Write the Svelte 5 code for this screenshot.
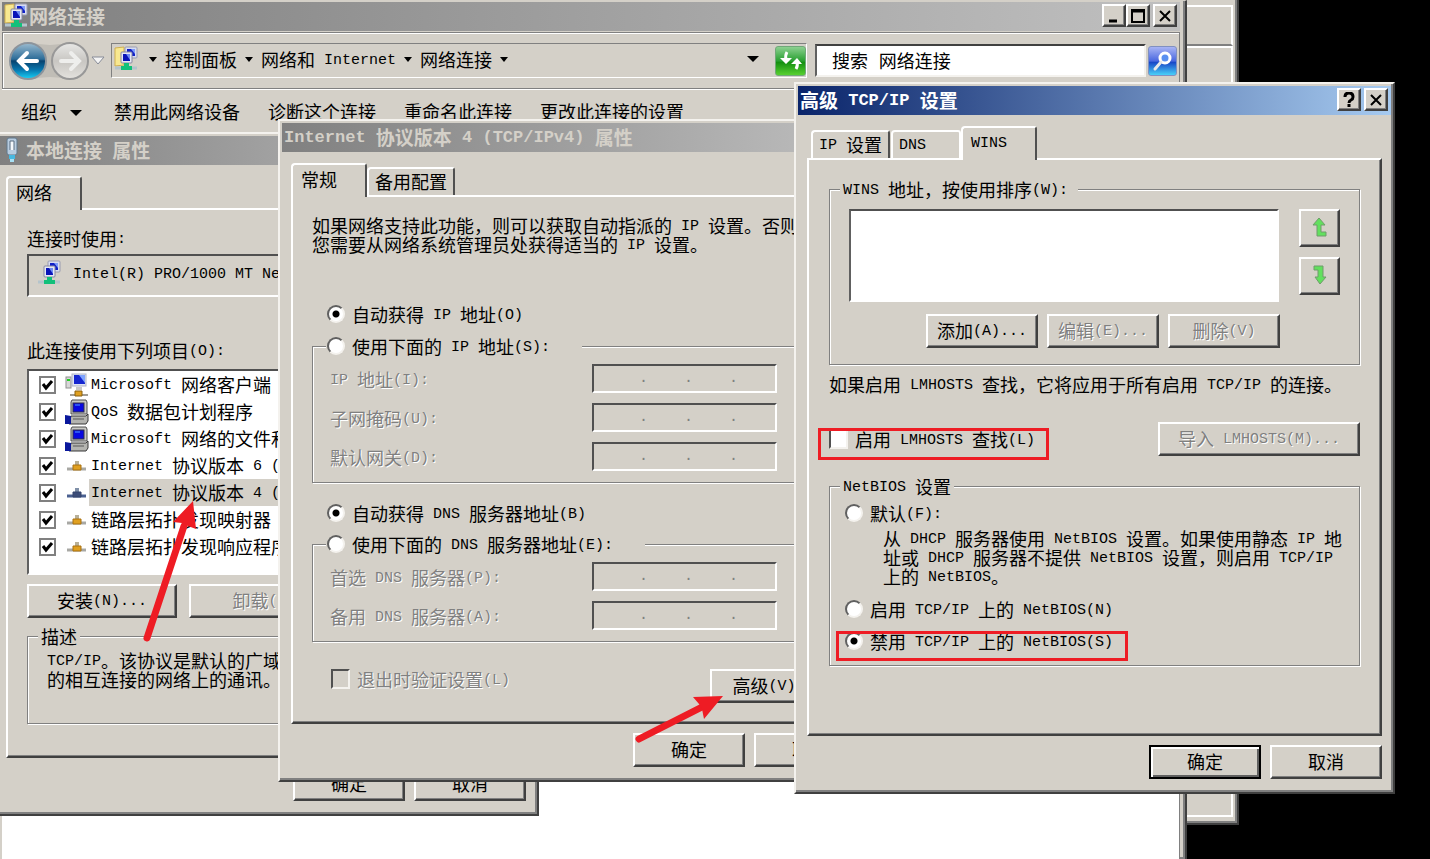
<script>
    let netbios = $state("disable")
    let ipMode = $state("auto")
    let dnsMode = $state("auto")
    let lmhosts = $state(false)
    let search = $state("搜索 网络连接")
    let items = $state([
        {name: "Microsoft 网络客户端", icon: "client", checked: true},
        {name: "QoS 数据包计划程序", icon: "pc", checked: true},
        {name: "Microsoft 网络的文件和", icon: "pc", checked: true},
        {name: "Internet 协议版本 6 (", icon: "proto", checked: true},
        {name: "Internet 协议版本 4 (", icon: "proto", checked: true, selected: true},
        {name: "链路层拓扑发现映射器", icon: "proto", checked: true},
        {name: "链路层拓扑发现响应程序", icon: "proto", checked: true}
    ])
    const emptyIp = "     .    .    ."
    const ipFields = ["IP 地址(I):", "子网掩码(U):", "默认网关(D):"]
    const dnsFields = ["首选 DNS 服务器(P):", "备用 DNS 服务器(A):"]
    const crumbs = ["控制面板", "网络和 Internet", "网络连接"]
    const commands = ["禁用此网络设备", "诊断这个连接", "重命名此连接", "更改此连接的设置"]

    // latin runs are set half as wide as a chinese character
    function parts(text) {
        return text.split(/([\x20-\x7e]+)/).filter(p => p != "")
    }
</script>

{#snippet mix(text)}{#each parts(text) as p}{#if p.charCodeAt(0) < 127}<span class="latin">{p}</span>{:else}{p}{/if}{/each}{/snippet}

{#snippet monitors()}
    <rect x="11" y="1" width="12" height="11" rx="1" fill="#d8dcf0" stroke="#9a9cb0"/>
    <rect x="13" y="3" width="8" height="7" fill="#1020c8"/>
    <path d="M17 3h4v5z" fill="#7f9cf8"/>
    <rect x="7" y="6" width="11" height="11" rx="1" fill="#e6e8f4" stroke="#8688a0"/>
    <rect x="9" y="8" width="7" height="7" fill="#0a14b8"/>
    <path d="M12 8h4v6z" fill="#6f8cf4"/>
    <path d="M1 22h22" stroke="#b4c4cc" stroke-width="3"/>
    <path d="M10 17h5v3h3v4H7v-4h3z" fill="#12c07a"/>
{/snippet}

{#snippet folderIcon()}
    <svg width="24" height="26" viewBox="0 0 24 26" aria-hidden="true">
        <path d="M1 2l9-1v18l-9 1z" fill="#f8e890" stroke="#d0b050"/>
        {@render monitors()}
    </svg>
{/snippet}

{#snippet itemIcon(kind, selected)}
    <svg width="24" height="26" viewBox="0 0 24 26" aria-hidden="true">
        {#if kind == "client"}
            <rect x="1" y="5" width="5" height="11" fill="#d8d8d8" stroke="#909090"/>
            <path d="M2 8h3" stroke="#20d020" stroke-width="2"/>
            <rect x="7" y="2" width="14" height="12" fill="#dfe4f4" stroke="#b0b4c4"/>
            <rect x="9" y="3" width="11" height="9" fill="#1626d0"/>
            <path d="M14 3h6v8z" fill="#7fa4ff"/>
            <path d="M11 15h6v3h-6z" fill="#c8c8c8"/>
            <path d="M5 23h18" stroke="#a09c94" stroke-width="2"/>
            <path d="M10 19h7v5h-7z" fill="#e0a020" stroke="#8a6010"/>
        {:else if kind == "pc"}
            <path d="M7 1h14l1 2v12H6V3z" fill="#c8c8c4" stroke="#505050"/>
            <rect x="8" y="4" width="11" height="9" fill="#0808e0" stroke="#303048"/>
            <path d="M10 6h5" stroke="#50a0ff"/>
            <path d="M6 17h15l2-2v7l-2 3H4z" fill="#b4b4b0" stroke="#383838"/>
            <path d="M8 20h11" stroke="#585858"/>
            <path d="M0 16l6 1v8H0z" fill="#0a189c"/>
        {:else}
            <path d="M2 16h19" stroke={selected ? "#4a6090" : "#a8a8a4"} stroke-width="3"/>
            <path d="M10 8h4v4h-4z" fill={selected ? "#8090a8" : "#b8b098"}/>
            <path d="M8 12h8v5H8z" fill={selected ? "#3c4c78" : "#e0a020"} stroke={selected ? "#34446c" : "#a87010"}/>
        {/if}
    </svg>
{/snippet}

{#snippet ipRow(id, text)}
    <div class="ip_row">
        <label for={id} class="disabled">{@render mix(text)}</label>
        <input type="text" {id} class="ip" value={emptyIp} disabled>
    </div>
{/snippet}

<main class="desktop">
    <div class="window back">
        <div class="back_top"></div>
        <div class="back_body"></div>
    </div>

    <section class="window explorer">
        <header class="title inactive">
            {@render folderIcon()}
            <h1>网络连接</h1>
            <div class="title_buttons">
                <button aria-label="最小化"><svg width="14" height="14"><path d="M2 12h8" stroke="#000" stroke-width="3"/></svg></button>
                <button aria-label="最大化"><svg width="14" height="14"><path d="M1 1h12v12H1z" fill="none" stroke="#000" stroke-width="2"/><path d="M0 2h14" stroke="#000" stroke-width="3"/></svg></button>
                <button class="close" aria-label="关闭"><svg width="14" height="14"><path d="M2 2l10 10M12 2L2 12" stroke="#000" stroke-width="2"/></svg></button>
            </div>
        </header>
        <nav class="toolbar">
            <svg class="travel" width="102" height="44" viewBox="0 0 102 44">
                <defs>
                    <linearGradient id="blue" x1="0" y1="0" x2="0" y2="1">
                        <stop offset="0" stop-color="#9cbcd0"/>
                        <stop offset="0.45" stop-color="#2c6c98"/>
                        <stop offset="0.5" stop-color="#08436f"/>
                        <stop offset="0.75" stop-color="#0878b0"/>
                        <stop offset="1" stop-color="#18d4f8"/>
                    </linearGradient>
                    <linearGradient id="grey" x1="0" y1="0" x2="0" y2="1">
                        <stop offset="0" stop-color="#e8e8e6"/>
                        <stop offset="0.5" stop-color="#c8c6c2"/>
                        <stop offset="1" stop-color="#e4e2de"/>
                    </linearGradient>
                </defs>
                <path d="M24 3q21 6 42 0v38q-21-6-42 0z" fill="#c0bdb6"/>
                <circle cx="23" cy="22" r="18" fill="url(#blue)" stroke="#8c949c" stroke-width="2"/>
                <path d="M32 22H15M22 14l-8 8 8 8" fill="none" stroke="#fff" stroke-width="4" stroke-linecap="round"/>
                <circle cx="65" cy="22" r="18" fill="url(#grey)" stroke="#989898" stroke-width="2"/>
                <path d="M56 22h17M66 14l8 8-8 8" fill="none" stroke="#eeeeec" stroke-width="4" stroke-linecap="round"/>
                <path d="M87 18h12l-6 7z" fill="#f4f4f4" stroke="#888c98"/>
            </svg>
            <div class="address">
                {@render folderIcon()}
                <span class="arrow small"></span>
                {#each crumbs as crumb}
                    <a href="#crumb">{@render mix(crumb)}</a>
                    <span class="arrow small"></span>
                {/each}
                <span class="arrow last"></span>
                <button class="refresh" aria-label="刷新">
                    <svg width="26" height="26" viewBox="0 0 26 26">
                        <path d="M9 4q-2 3-1 8M18 21q2-3 1-7" fill="none" stroke="#fff" stroke-width="3"/>
                        <path d="M2 10h12l-6 6zM13 16h11l-5-6z" fill="#fff"/>
                    </svg>
                </button>
            </div>
            <input type="text" class="search" aria-label="搜索" bind:value={search}>
            <button class="find" aria-label="查找">
                <svg width="26" height="26" viewBox="0 0 26 26">
                    <circle cx="15" cy="10" r="5" fill="#5a90f0" stroke="#fff" stroke-width="3"/>
                    <path d="M11 14l-6 7" stroke="#e8e8e8" stroke-width="3" stroke-linecap="round"/>
                </svg>
            </button>
        </nav>
        <div class="commands">
            <button>组织 <span class="arrow"></span></button>
            {#each commands as command}
                <button>{command}</button>
            {/each}
        </div>
        <div class="files"></div>
    </section>

    <section class="window local">
        <header class="title inactive">
            <svg class="plug" width="12" height="26" viewBox="0 0 12 26" aria-hidden="true">
                <rect x="1" y="1" width="10" height="17" rx="2" fill="#b8cce0" stroke="#60788c"/>
                <path d="M4 13V4h4v9" fill="#f4f8fc" stroke="#586c80"/>
                <path d="M3 18h6v4H3z" fill="#48b8e0"/>
                <path d="M4 22h4v3H4z" fill="#a8e0f4"/>
            </svg>
            <h1>{@render mix("本地连接 属性")}</h1>
        </header>
        <div class="body">
            <div class="tabs" role="tablist">
                <button role="tab" aria-selected="true" class="tab selected">网络</button>
            </div>
            <div class="panel">
                <p class="line">{@render mix("连接时使用:")}</p>
                <div class="adapter">
                    <svg width="24" height="26" viewBox="0 0 24 26" aria-hidden="true">{@render monitors()}</svg>
                    <span>{@render mix("Intel(R) PRO/1000 MT Ne")}</span>
                </div>
                <p class="line items_label">{@render mix("此连接使用下列项目(O):")}</p>
                <ul class="items">
                    {#each items as item}
                        <li>
                            <label>
                                <input type="checkbox" class="tick" bind:checked={item.checked}>
                                {@render itemIcon(item.icon, item.selected)}
                                <span class="item_name" class:selected={item.selected}>{@render mix(item.name)}</span>
                            </label>
                        </li>
                    {/each}
                </ul>
                <div class="item_buttons">
                    <button class="btn">{@render mix("安装(N)...")}</button>
                    <button class="btn" disabled>{@render mix("卸载(U)")}</button>
                </div>
                <fieldset class="describe">
                    <legend>描述</legend>
                    <p class="text">{@render mix("TCP/IP。该协议是默认的广域")}<br>的相互连接的网络上的通讯。</p>
                </fieldset>
            </div>
            <footer>
                <button class="btn">确定</button>
                <button class="btn">取消</button>
            </footer>
        </div>
    </section>

    <section class="window ipv4">
        <header class="title inactive">
            <h1>{@render mix("Internet 协议版本 4 (TCP/IPv4) 属性")}</h1>
        </header>
        <div class="body">
            <div class="tabs" role="tablist">
                <button role="tab" aria-selected="true" class="tab selected">常规</button>
                <button role="tab" aria-selected="false" class="tab">备用配置</button>
            </div>
            <div class="panel">
                <p class="text">{@render mix("如果网络支持此功能，则可以获取自动指派的 IP 设置。否则")}<br>{@render mix("您需要从网络系统管理员处获得适当的 IP 设置。")}</p>
                <label class="choice auto_ip">
                    <input type="radio" name="ip" value="auto" bind:group={ipMode}>
                    <span>{@render mix("自动获得 IP 地址(O)")}</span>
                </label>
                <fieldset class="manual">
                    <legend>
                        <label class="choice">
                            <input type="radio" name="ip" value="manual" bind:group={ipMode}>
                            <span>{@render mix("使用下面的 IP 地址(S):")}</span>
                        </label>
                    </legend>
                    {#each ipFields as field, i}
                        {@render ipRow("ip" + i, field)}
                    {/each}
                </fieldset>
                <label class="choice auto_dns">
                    <input type="radio" name="dns" value="auto" bind:group={dnsMode}>
                    <span>{@render mix("自动获得 DNS 服务器地址(B)")}</span>
                </label>
                <fieldset class="manual">
                    <legend>
                        <label class="choice">
                            <input type="radio" name="dns" value="manual" bind:group={dnsMode}>
                            <span>{@render mix("使用下面的 DNS 服务器地址(E):")}</span>
                        </label>
                    </legend>
                    {#each dnsFields as field, i}
                        {@render ipRow("dns" + i, field)}
                    {/each}
                </fieldset>
                <div class="advanced_row">
                    <label class="choice disabled">
                        <input type="checkbox" class="box" disabled>
                        <span>{@render mix("退出时验证设置(L)")}</span>
                    </label>
                    <button class="btn">{@render mix("高级(V)...")}</button>
                </div>
            </div>
            <footer>
                <button class="btn">确定</button>
                <button class="btn">取消</button>
            </footer>
        </div>
    </section>

    <section class="window tcpip">
        <header class="title">
            <h1>{@render mix("高级 TCP/IP 设置")}</h1>
            <div class="title_buttons">
                <button aria-label="帮助"><svg width="14" height="16"><path d="M3 5q0-4 4-4t4 4q0 2-2 3-2 1-2 3M7 12v3" fill="none" stroke="#000" stroke-width="3"/></svg></button>
                <button class="close" aria-label="关闭"><svg width="14" height="14"><path d="M2 2l10 10M12 2L2 12" stroke="#000" stroke-width="2"/></svg></button>
            </div>
        </header>
        <div class="body">
            <div class="tabs inset" role="tablist">
                <button role="tab" aria-selected="false" class="tab">{@render mix("IP 设置")}</button>
                <button role="tab" aria-selected="false" class="tab dns">{@render mix("DNS")}</button>
                <button role="tab" aria-selected="true" class="tab selected">{@render mix("WINS")}</button>
            </div>
            <div class="panel">
                <fieldset class="wins">
                    <legend class="wide">{@render mix("WINS 地址，按使用排序(W):")}</legend>
                    <div class="wins_list">
                        <select size="4" aria-label="WINS 地址"></select>
                        <div class="order">
                            <button class="btn" aria-label="上移"><svg width="16" height="20" viewBox="0 0 16 20"><path d="M7 1l6 7H9v7h5v4H5V8H1z" fill="#62e05e" stroke="#6f9c6a"/></svg></button>
                            <button class="btn" aria-label="下移"><svg width="16" height="20" viewBox="0 0 16 20"><path d="M8 19l6-7h-3V1H2v4h4v7H3z" fill="#62e05e" stroke="#6f9c6a"/></svg></button>
                        </div>
                    </div>
                    <div class="wins_buttons">
                        <button class="btn">{@render mix("添加(A)...")}</button>
                        <button class="btn" disabled>{@render mix("编辑(E)...")}</button>
                        <button class="btn" disabled>{@render mix("删除(V)")}</button>
                    </div>
                </fieldset>
                <p class="line note">{@render mix("如果启用 LMHOSTS 查找，它将应用于所有启用 TCP/IP 的连接。")}</p>
                <div class="lmhosts">
                    <label class="choice">
                        <input type="checkbox" class="box" bind:checked={lmhosts}>
                        <span>{@render mix("启用 LMHOSTS 查找(L)")}</span>
                    </label>
                    <button class="btn" disabled>{@render mix("导入 LMHOSTS(M)...")}</button>
                </div>
                <fieldset class="netbios">
                    <legend>{@render mix("NetBIOS 设置")}</legend>
                    <label class="choice">
                        <input type="radio" name="netbios" value="default" bind:group={netbios}>
                        <span>{@render mix("默认(F):")}</span>
                    </label>
                    <p class="text">{@render mix("从 DHCP 服务器使用 NetBIOS 设置。如果使用静态 IP 地")}<br>{@render mix("址或 DHCP 服务器不提供 NetBIOS 设置，则启用 TCP/IP")}<br>{@render mix("上的 NetBIOS。")}</p>
                    <label class="choice">
                        <input type="radio" name="netbios" value="enable" bind:group={netbios}>
                        <span>{@render mix("启用 TCP/IP 上的 NetBIOS(N)")}</span>
                    </label>
                    <label class="choice">
                        <input type="radio" name="netbios" value="disable" bind:group={netbios}>
                        <span>{@render mix("禁用 TCP/IP 上的 NetBIOS(S)")}</span>
                    </label>
                </fieldset>
            </div>
            <footer>
                <button class="btn default">确定</button>
                <button class="btn">取消</button>
            </footer>
        </div>
    </section>

    <!-- red marks for the steps -->
    <svg class="marks" aria-hidden="true">
        <g fill="none" stroke="#ee1c24">
            <rect x="819" y="429" width="228" height="29" stroke-width="3" shape-rendering="crispEdges"/>
            <rect x="837" y="632" width="289" height="27" stroke-width="3" shape-rendering="crispEdges"/>
            <path d="M147 638L184 526M639 739L704 706" stroke-width="7" stroke-linecap="round"/>
        </g>
        <path d="M193 501L173 522L182 523L188 526L196 529zM723 696L693 697L699 704L702 709L704 719z" fill="#ee1c24"/>
    </svg>
</main>

<style>
    :global(body){
        background-color: black;
    }

    .desktop{
        position: relative;
        min-height: 100vh;
        overflow: hidden;
        background-color: black;
        color: black;
        font-family: "Noto Sans CJK SC", sans-serif;
        font-size: 18px;
        line-height: 20px;
        white-space: nowrap;
    }

    .desktop *{
        box-sizing: border-box;
    }

    .latin{
        font-family: "Liberation Mono", monospace;
        font-size: 15px;
        line-height: 0;
        vertical-align: 3px;
        white-space: pre;
    }

    p, ul{
        margin: 0;
        padding: 0;
        list-style: none;
    }

    svg{
        display: block;
        flex: none;
    }

    button, input, select{
        font: inherit;
        color: inherit;
        margin: 0;
        border-radius: 0;
    }

    .window{
        position: absolute;
        padding: 2px;
        background-color: #d4d0c8;
        border: 2px solid;
        border-color: #f4f2ee #404040 #404040 #f4f2ee;
        box-shadow: inset -2px -2px #808080;
    }

    .back{
        left: 700px;
        top: -10px;
        width: 539px;
        height: 835px;
        padding: 13px 4px 6px 2px;
        display: flex;
        flex-direction: column;
    }

    .back_top{
        height: 41px;
        border: 2px solid;
        border-color: #fff #fff #808080 #808080;
    }

    .back_body{
        flex: 1;
        border: 2px solid #fff;
    }

    .explorer{
        left: 0;
        top: 0;
        bottom: 0;
        width: 1187px;
        padding: 1px 5px 0 0;
        border-width: 1px 2px 0 2px;
        border-color: #d4d0c8 #404040 #404040 #d4d0c8;
        display: flex;
        flex-direction: column;
    }

    .local{
        left: -7px;
        top: 132px;
        width: 546px;
    }

    .ipv4{
        left: 278px;
        top: 119px;
        width: 601px;
    }

    .tcpip{
        left: 794px;
        top: 82px;
        width: 601px;
    }

    .title{
        display: flex;
        align-items: center;
        height: 29px;
        padding: 0 3px 2px 2px;
        color: white;
        background: linear-gradient(to right, #0a246a, #a6caf0);
    }

    .inactive{
        color: #d4d0c8;
        background: linear-gradient(to right, #808080, #c0c0c0);
    }

    .title h1{
        margin: 0;
        font-size: 19px;
        line-height: 24px;
        font-weight: bold;
    }

    .explorer h1{
        margin-left: 1px;
    }

    .title .latin{
        font-size: 17px;
    }

    .plug{
        margin: 0 8px 0 7px;
    }

    .title_buttons{
        display: flex;
        margin-left: auto;
    }

    .title_buttons button{
        display: flex;
        align-items: center;
        justify-content: center;
        width: 24px;
        height: 23px;
        padding: 0;
        color: black;
        background-color: #d4d0c8;
        border: 2px solid;
        border-color: #fff #404040 #404040 #fff;
        box-shadow: inset -1px -1px #808080;
    }

    .title_buttons .close{
        margin-left: 3px;
    }

    /* network connections window */
    .toolbar{
        display: flex;
        align-items: center;
        height: 57px;
        margin-top: 1px;
        padding: 0 2px;
        border: 1px solid #808080;
        box-shadow: inset 1px 1px #fff, 0 1px #fff;
    }

    .travel{
        margin-right: 4px;
    }

    .address{
        display: flex;
        flex: 1;
        align-items: center;
        height: 35px;
        padding: 0 0 4px 2px;
        border: 1px solid;
        border-color: #808080 #fff #fff #808080;
    }

    .address a{
        color: black;
        text-decoration: none;
    }

    .arrow{
        display: inline-block;
        flex: none;
        border: 6px solid transparent;
        border-top-color: black;
        border-bottom: 0;
    }

    .arrow.small{
        border-width: 5px 4px 0 4px;
        margin: 2px 8px 0 8px;
    }

    .address svg + .arrow{
        margin-left: 11px;
    }

    .arrow.last{
        margin-left: auto;
        margin-right: 16px;
    }

    .refresh, .find{
        display: flex;
        align-items: center;
        justify-content: center;
        width: 31px;
        height: 30px;
        padding: 0;
        border: 1px solid #70a878;
        border-radius: 3px;
        background: linear-gradient(#8cd090, #28a030 50%, #149010 55%, #58d030);
    }

    .refresh{
        margin-top: 4px;
    }

    .find{
        width: 29px;
        margin-left: 2px;
        border-color: #8090c0;
        background: linear-gradient(#a8b4f4, #4a68e0 50%, #1848c8 55%, #48d0f8);
    }

    .search{
        width: 331px;
        height: 33px;
        margin-left: 8px;
        padding: 0 15px 2px 15px;
        background-color: white;
        border: 2px solid;
        border-color: #404040 #f4f2ee #f4f2ee #606060;
        font-family: "Liberation Mono", "Noto Sans CJK SC", monospace;
    }

    .commands{
        display: flex;
        align-items: center;
        gap: 28px;
        height: 45px;
        padding: 0 19px;
        border-bottom: 1px solid #fff;
    }

    .commands button{
        padding: 0;
        background: none;
        border: none;
    }

    .commands .arrow{
        margin: 0 4px 3px 9px;
    }

    .files{
        flex: 1;
        background-color: white;
        border-right: 1px solid #808080;
    }

    /* tabs and panels */
    .body{
        padding: 11px 9px 11px 9px;
    }

    .tabs{
        display: flex;
        align-items: flex-end;
        height: 32px;
    }

    .inset{
        padding-left: 4px;
    }

    .tab{
        height: 28px;
        padding: 0 6px 2px 6px;
        background-color: #d4d0c8;
        border: 2px solid;
        border-color: #fff #505050 #fff #fff;
        border-bottom: 0;
        border-radius: 4px 3px 0 0;
    }

    .tab.dns{
        width: 70px;
        margin-left: 1px;
        border-right-color: #fff;
        text-align: left;
    }

    .tab.selected{
        position: relative;
        width: 76px;
        height: 34px;
        margin-bottom: -2px;
        padding: 0 9px 5px 8px;
        text-align: left;
    }

    .panel{
        padding: 19px;
        border: 2px solid;
        border-color: #fff #404040 #404040 #fff;
        box-shadow: inset -1px -1px #808080;
    }

    .text{
        line-height: 19px;
    }

    fieldset{
        min-width: 0;
        margin: 0;
        border: 1px solid #808080;
        box-shadow: 1px 1px #fff, inset 1px 1px #fff;
    }

    legend{
        padding: 0 3px;
        background-color: #d4d0c8;
    }

    .wide{
        padding-right: 10px;
    }

    footer{
        display: flex;
        justify-content: flex-end;
        gap: 9px;
        margin-top: 9px;
    }

    .btn{
        width: 112px;
        height: 34px;
        padding: 0 0 2px 0;
        text-align: center;
        background-color: #d4d0c8;
        border: 2px solid;
        border-color: #fff #404040 #404040 #fff;
        box-shadow: inset -1px -1px #808080;
    }

    .btn.default{
        border-color: black;
        box-shadow: inset 2px 2px #fff, inset -2px -2px #606060;
    }

    .btn:disabled, .disabled{
        color: #808080;
        text-shadow: 1px 1px #fff;
    }

    .choice{
        display: flex;
        align-items: center;
        gap: 7px;
    }

    input[type="radio"]{
        appearance: none;
        width: 18px;
        height: 18px;
        background-color: white;
        border: 2px solid;
        border-color: #606060 #f4f2ee #f4f2ee #606060;
        border-radius: 50%;
    }

    input[type="radio"]:checked{
        background-image: radial-gradient(circle, black 3px, transparent 4px);
    }

    .box{
        appearance: none;
        width: 19px;
        height: 20px;
        background-color: white;
        border: 2px solid;
        border-color: #505050 #f4f2ee #f4f2ee #505050;
    }

    .box:disabled{
        background-color: #d4d0c8;
    }

    .tick{
        appearance: none;
        width: 17px;
        height: 18px;
        border: 2px solid #808080;
        background-color: white;
    }

    .tick:checked{
        background-image: url("data:image/svg+xml,%3Csvg xmlns='http://www.w3.org/2000/svg' viewBox='0 0 13 14'%3E%3Cpath d='M2 6l3 4 6-7' fill='none' stroke='black' stroke-width='3'/%3E%3C/svg%3E");
    }

    /* local connection */
    .local .panel{
        padding: 18px 19px 32px 19px;
    }

    .adapter{
        display: flex;
        align-items: center;
        gap: 12px;
        height: 43px;
        margin-top: 6px;
        padding: 0 8px 6px 8px;
        border: 2px solid;
        border-color: #505050 #fff #fff #505050;
        overflow: hidden;
    }

    .items_label{
        margin-top: 43px;
    }

    .items{
        height: 206px;
        margin-top: 9px;
        background-color: white;
        border: 2px solid;
        border-color: #505050 #fff #fff #606060;
    }

    .items label{
        display: flex;
        align-items: center;
        height: 27px;
        padding-left: 10px;
    }

    .items svg{
        margin-left: 9px;
    }

    .item_name{
        padding: 0 2px;
        line-height: 27px;
    }

    .item_name.selected{
        flex: 1;
        background-color: #d4d0c8;
    }

    .item_buttons{
        display: flex;
        gap: 12px;
        margin-top: 9px;
    }

    .item_buttons .btn{
        width: 150px;
    }

    .describe{
        margin-top: 8px;
        padding: 5px 10px 34px 19px;
    }

    .describe legend{
        margin-left: -9px;
    }

    /* ipv4 */
    .auto_ip, .auto_dns{
        margin: 50px 0 12px 15px;
    }

    .auto_dns{
        margin: 20px 0 11px 15px;
    }

    .manual{
        padding: 8px 17px 11px 17px;
    }

    .manual legend{
        margin-left: -4px;
        padding: 0 32px 0 1px;
    }

    .ip_row{
        display: flex;
        align-items: center;
    }

    .ip_row + .ip_row{
        margin-top: 10px;
    }

    .ip_row label{
        width: 262px;
    }

    .ip{
        width: 185px;
        height: 29px;
        padding: 0;
        color: #808080;
        background-color: #d4d0c8;
        border: 2px solid;
        border-color: #505050 #fff #fff #505050;
        font-family: "Liberation Mono", monospace;
        font-size: 15px;
    }

    .advanced_row{
        display: flex;
        align-items: flex-start;
        justify-content: space-between;
        margin-top: 27px;
        padding-left: 19px;
    }

    .advanced_row .btn{
        width: 135px;
    }

    /* advanced tcp/ip */
    .tcpip .panel{
        padding: 19px 20px 68px 20px;
    }

    .wins{
        padding: 10px 19px 16px 19px;
    }

    .wins legend{
        margin-left: -9px;
    }

    .wins_list{
        display: flex;
        gap: 20px;
    }

    .wins_list select{
        flex: 1;
        height: 93px;
        background-color: white;
        border: 2px solid;
        border-color: #505050 #fff #fff #606060;
    }

    .order{
        display: flex;
        flex-direction: column;
        gap: 10px;
    }

    .order .btn{
        display: flex;
        align-items: center;
        justify-content: center;
        width: 41px;
        height: 38px;
    }

    .wins_buttons{
        display: flex;
        justify-content: flex-end;
        gap: 9px;
        margin: 12px 60px 0 0;
    }

    .note{
        margin-top: 9px;
    }

    .lmhosts{
        display: flex;
        align-items: center;
        justify-content: space-between;
        margin-top: 28px;
    }

    .lmhosts .btn{
        width: 202px;
    }

    .netbios{
        margin-top: 20px;
        padding: 7px 15px 14px 15px;
    }

    .netbios legend{
        margin-left: -5px;
    }

    .netbios .text{
        margin: 6px 0 13px 38px;
    }

    .netbios .choice + .choice{
        margin-top: 12px;
    }

    .marks{
        position: absolute;
        left: 0;
        top: 0;
        width: 100%;
        height: 100%;
        pointer-events: none;
    }
</style>
